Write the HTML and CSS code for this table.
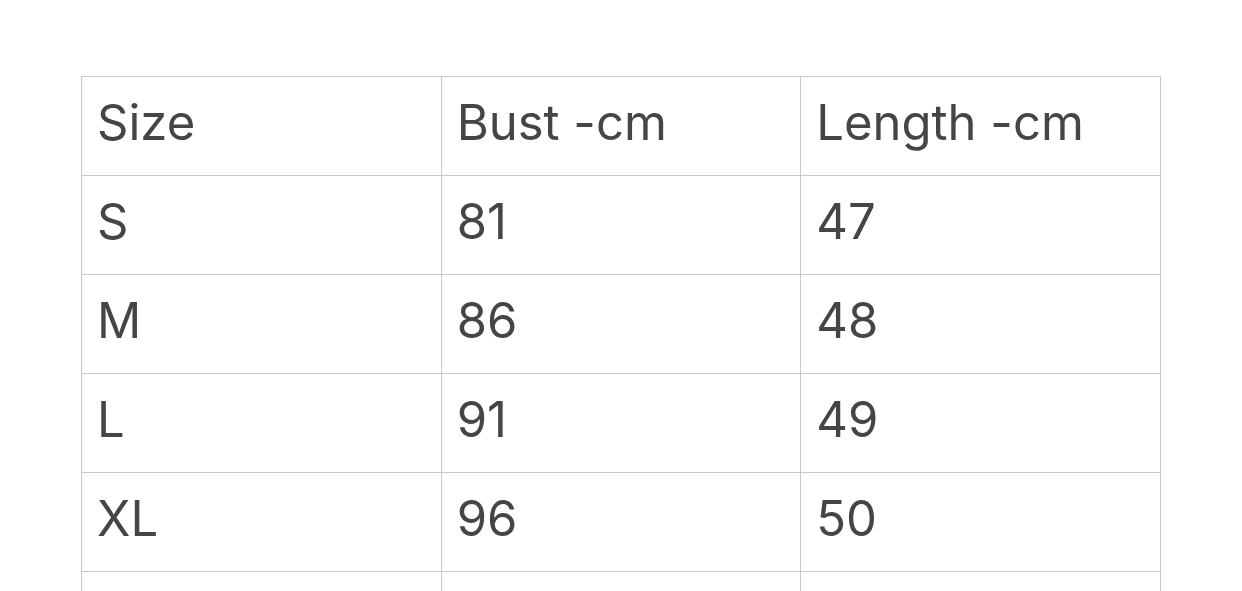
FILE: index.html
```
<!DOCTYPE html>
<html>
<head>
<meta charset="utf-8">
<link rel="stylesheet" href="styles.css">
</head>
<body>
<div class="page">
  <table class="size-table">
    <tr><td>Size</td><td>Bust -cm</td><td>Length -cm</td></tr>
    <tr><td>S</td><td>81</td><td>47</td></tr>
    <tr><td>M</td><td>86</td><td>48</td></tr>
    <tr><td>L</td><td>91</td><td>49</td></tr>
    <tr><td>XL</td><td>96</td><td>50</td></tr>
    <tr><td>XXL</td><td>101</td><td>51</td></tr>
  </table>
</div>
</body>
</html>
```
FILE: styles.css
```
html, body {
  margin: 0;
  padding: 0;
  background: #fff;
}
.page {
  padding: 76px 0 0 81px;
}
.size-table {
  border-collapse: collapse;
  width: 1080px;
  table-layout: fixed;
  font-family: Inter, "Liberation Sans", sans-serif;
  font-size: 49px;
  color: #454545;
}
.size-table td {
  border: 1px solid #c9c9c9;
  height: 99px;
  padding: 0 0 8px 15px;
  box-sizing: border-box;
  vertical-align: middle;
  white-space: nowrap;
}
```
